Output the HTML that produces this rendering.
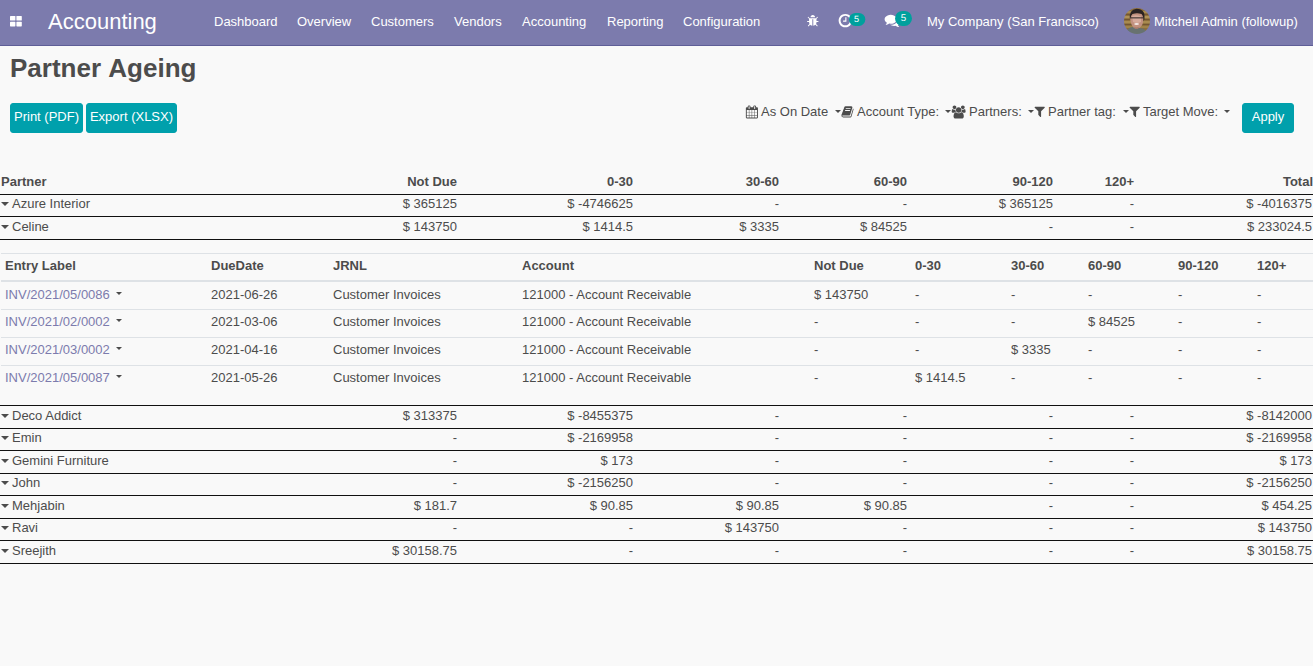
<!DOCTYPE html>
<html><head><meta charset="utf-8"><title>Odoo - Partner Ageing</title>
<style>
*{box-sizing:border-box}
html,body{margin:0;padding:0}
body{width:1313px;height:666px;overflow:hidden;background:#f9f9f9;font-family:"Liberation Sans",Arial,sans-serif;font-size:13px;color:#4c4c4c;line-height:1.5}
.nav{position:absolute;left:0;top:0;width:1313px;height:46px;background:#7c7bad;border-bottom:1px solid #5f5e97;color:#fff}
.nav span,.nav div{position:absolute;white-space:nowrap}
.nav .mi{top:1px;line-height:42px;font-size:13px}
.brand{left:48px;top:1px;line-height:42px;font-size:22px}
h1{position:absolute;left:10px;top:50px;margin:0;font-size:26px;font-weight:bold;line-height:36px;color:#4c4c4c;word-spacing:1px}
.btn{position:absolute;top:103px;height:30px;background:#00a0ac;border:1px solid #00a0ac;border-radius:3px;color:#fff;font-size:13px;line-height:26px;text-align:center;padding:0}
.flt{position:absolute;top:102px;font-size:13px;line-height:20px;white-space:nowrap;color:#4c4c4c}

.r{position:absolute;left:0;width:1313px;height:22px;line-height:22px;font-size:13px;color:#4c4c4c}
.r span{position:absolute;top:0;white-space:nowrap}
.r.h{font-weight:bold}
.ct{position:absolute;left:1px;top:9px;width:0;height:0;border-left:4px solid transparent;border-right:4px solid transparent;border-top:4px solid #4c4c4c}
.ln{position:absolute;left:0;width:1313px;height:1px;background:#111}
.sl{position:absolute;left:1px;width:1312px;height:1px;background:#dee2e6}
.s{position:absolute;left:0;width:1313px;height:26px;line-height:26px;font-size:13px;color:#4c4c4c}
.s.h{font-weight:bold}
.s span{position:absolute;top:0;white-space:nowrap}
.s a{color:#7c7bad}
.ct2{display:inline-block;margin-left:6px;vertical-align:4px;width:0;height:0;border-left:3px solid transparent;border-right:3px solid transparent;border-top:3.5px solid #4c4c4c}

.fc{position:absolute;top:110px;width:0;height:0;border-left:3px solid transparent;border-right:3px solid transparent;border-top:3px solid #4c4c4c}
</style></head><body>
<div class="nav">
 <svg style="position:absolute;left:10px;top:16px" width="12" height="11" viewBox="0 0 12 11"><rect x="0" y="0" width="5.4" height="4.6" rx=".6" fill="#fff"/><rect x="6.4" y="0" width="5.4" height="4.6" rx=".6" fill="#fff"/><rect x="0" y="5.8" width="5.4" height="4.6" rx=".6" fill="#fff"/><rect x="6.4" y="5.8" width="5.4" height="4.6" rx=".6" fill="#fff"/></svg>
 <span class="brand">Accounting</span>
 <span class="mi" style="left:214px">Dashboard</span>
 <span class="mi" style="left:297px">Overview</span>
 <span class="mi" style="left:371px">Customers</span>
 <span class="mi" style="left:454px">Vendors</span>
 <span class="mi" style="left:522px">Accounting</span>
 <span class="mi" style="left:607px">Reporting</span>
 <span class="mi" style="left:683px">Configuration</span>
 <span class="mi" style="left:927px">My Company (San Francisco)</span>
 <span class="mi" style="left:1154px">Mitchell Admin (followup)</span>
<svg style="position:absolute;left:806px;top:14px" width="15" height="15" viewBox="0 0 15 15"><path fill="#fff" transform="translate(0.30 0.50) scale(0.007254)" d="M1696 960q0 26-19 45t-45 19h-224q0 171-67 290l208 209q19 19 19 45t-19 45q-18 19-45 19t-45-19l-198-197q-5 5-15 13t-42 28.500-65 36.500-82 29-97 13v-896h-128v896q-51 0-101.500-13.500t-87-33-66-39-43.500-32.500l-15-14-183 207q-20 21-48 21-24 0-43-16-19-18-20.500-44.500t15.500-46.500l202-227q-58-114-58-274h-224q-26 0-45-19t-19-45 19-45 45-19h224v-294l-173-173q-19-19-19-45t19-45 45-19 45 19l173 173h844l173-173q19-19 45-19t45 19 19 45-19 45l-173 173v294h224q26 0 45 19t19 45zm-480-576h-640q0-133 93.500-226.500t226.500-93.500 226.500 93.500 93.500 226.500z"/></svg>
<svg style="position:absolute;left:837px;top:12px" width="17" height="17" viewBox="0 0 17 17"><path fill="#fff" transform="translate(0.50 0.80) scale(0.008705)" d="M1024 544v448q0 14-9 23t-23 9h-320q-14 0-23-9t-9-23v-64q0-14 9-23t23-9h224v-352q0-14 9-23t23-9h64q14 0 23 9t9 23zm416 352q0-148-73-273t-198-198-273-73-273 73-198 198-73 273 73 273 198 198 273 73 273-73 198-198 73-273zm224 0q0 209-103 385.500t-279.500 279.500-385.500 103-385.500-103-279.500-279.500-103-385.500 103-385.500 279.500-279.500 385.500-103 385.500 103 279.500 279.500 103 385.500z"/></svg>
<svg style="position:absolute;left:848px;top:10px" width="20" height="18" viewBox="848 10 20 18"><rect x="849" y="12.9" width="16.3" height="13" rx="6.5" fill="#00a09d"/><text x="856.6" y="21.8" font-size="9.1" fill="#fff" text-anchor="middle" text-rendering="geometricPrecision" font-family="Liberation Sans, Arial, sans-serif">5</text></svg>
<svg style="position:absolute;left:884px;top:12px" width="17" height="17" viewBox="0 0 17 17"><path fill="#fff" transform="translate(0.60 0.60) scale(0.008705)" d="M1408 768q0 139-94 257t-256.500 186.500-353.500 68.500q-86 0-176-16-124 88-278 128-36 9-86 16h-3q-11 0-20.500-8t-11.500-21q-1-3-1-6.500t.5-6.500 2-6l2.500-5 3.500-5.500 4-5 4.500-5 4-4.500q5-6 23-25t26-29.500 22.500-29 25-38.500 20.500-44q-124-72-195-177t-71-224q0-139 94-257t256.500-186.500 353.500-68.500 353.500 68.500 256.500 186.500 94 257zm384 256q0 120-71 224.500t-195 176.500q10 24 20.500 44t25 38.500 22.500 29 26 29.500 23 25q1 1 4 4.500t4.500 5 4 5 3.500 5.500l2.500 5 2 6 .5 6.500-1 6.500q-3 14-13 22t-22 7q-50-7-86-16-154-40-278-128-90 16-176 16-271 0-472-132 58 4 88 4 161 0 309-45t264-129q125-92 192-212t67-254q0-77-23-152 129 71 204 178t75 230z"/></svg>
<svg style="position:absolute;left:894px;top:9px" width="20" height="19" viewBox="894 9 20 19"><rect x="895" y="10.9" width="17" height="15" rx="7.5" fill="#00a09d"/><text x="903.5" y="21.1" font-size="9.75" fill="#fff" text-anchor="middle" text-rendering="geometricPrecision" font-family="Liberation Sans, Arial, sans-serif">5</text></svg>
<svg style="position:absolute;left:1124px;top:8px" width="26" height="26" viewBox="0 0 26 26"><defs><clipPath id="av"><circle cx="13" cy="13" r="13"/></clipPath><filter id="bl" x="-10%" y="-10%" width="120%" height="120%"><feGaussianBlur stdDeviation="0.55"/></filter></defs><g clip-path="url(#av)"><g filter="url(#bl)"><rect x="-2" y="-2" width="30" height="30" fill="#8d6e3b"/><rect x="-2" y="3" width="30" height="2" fill="#a88a50"/><rect x="-2" y="8" width="30" height="2.2" fill="#ae9158"/><rect x="-2" y="13" width="30" height="2.2" fill="#a88a50"/><rect x="-2" y="18" width="30" height="2" fill="#9f824a"/><rect x="-2" y="6" width="30" height="1" fill="#735730"/><rect x="-2" y="11" width="30" height="1" fill="#735730"/><rect x="-2" y="16" width="30" height="1" fill="#735730"/><path d="M1 27 Q3 19.5 8 19 L15 20 Q20 20 22 23 L23 27 Z" fill="#67726f"/><path d="M6 9 Q5.5 3.5 12 3 Q19.5 3 19.5 10 Q19.5 17 16 19.5 Q13 21.5 10 20 Q6.5 17 6 9 Z" fill="#c2917f"/><path d="M8 8 Q12 6.5 17 8.5 L17 14 Q13 16 9 14 Z" fill="#d6aa9b"/><path d="M5.8 10.5 Q5 2 12.5 0.8 Q20.5 1 20.5 8 Q20.8 11 19.6 13.5 Q19.5 8 17.5 6 Q13 4.5 8.5 6 Q6.5 7.5 6.6 10.5 Z" fill="#2a2321"/><rect x="6.5" y="9.3" width="13" height="1.1" fill="#3d302d"/><ellipse cx="12.6" cy="16" rx="2.4" ry="1.1" fill="#f3e8e4"/><path d="M9.5 18.5 Q12.5 20.5 15.5 18.5 Q14 21 12.5 21 Q11 21 9.5 18.5Z" fill="#a87868"/></g></g></svg>
</div>
<h1>Partner Ageing</h1>
<div class="btn" style="left:10px;width:73px">Print (PDF)</div>
<div class="btn" style="left:86px;width:91px">Export (XLSX)</div>
<div class="flt" style="left:761px">As On Date</div>
<div class="flt" style="left:857px">Account Type:</div>
<div class="flt" style="left:969px">Partners:</div>
<div class="flt" style="left:1048px">Partner tag:</div>
<div class="flt" style="left:1143px">Target Move:</div>
<svg style="position:absolute;left:745px;top:105px" width="15" height="15" viewBox="0 0 15 15"><path fill="#4c4c4c" transform="translate(0.40 0.40) scale(0.007254)" d="M192 1664h288v-288h-288v288zm352 0h320v-288h-320v288zm-352-352h288v-320h-288v320zm352 0h320v-320h-320v320zm-352-384h288v-288h-288v288zm736 736h320v-288h-320v288zm-384-736h320v-288h-320v288zm768 736h288v-288h-288v288zm-384-352h320v-320h-320v320zm-352-864v-288q0-13-9.500-22.500t-22.500-9.500h-64q-13 0-22.500 9.500t-9.500 22.500v288q0 13 9.500 22.500t22.500 9.500h64q13 0 22.500-9.500t9.500-22.500zm736 864h288v-320h-288v320zm-384-384h320v-288h-320v288zm384 0h288v-288h-288v288zm32-480v-288q0-13-9.500-22.500t-22.500-9.500h-64q-13 0-22.500 9.500t-9.500 22.500v288q0 13 9.500 22.500t22.500 9.500h64q13 0 22.500-9.500t9.500-22.500zm384-64v1280q0 52-38 90t-90 38h-1408q-52 0-90-38t-38-90v-1280q0-52 38-90t90-38h128v-96q0-66 47-113t113-47h64q66 0 113 47t47 113v96h384v-96q0-66 47-113t113-47h64q66 0 113 47t47 113v96h128q52 0 90 38t38 90z"/></svg>
<i class="fc" style="left:835px"></i>
<svg style="position:absolute;left:841px;top:105px" width="14" height="15" viewBox="0 0 14 15"><path fill="#4c4c4c" transform="translate(0.00 0.40) scale(0.007254)" d="M1703 478q40 57 18 129l-275 906q-19 64-76.500 107.500t-122.500 43.500h-923q-77 0-148.500-53.500t-99.500-131.500q-24-67-2-127 0-4 3-27t4-37q1-8-3-21.500t-3-19.500q2-11 8-21t16.500-23.500 16.500-23.500q23-38 45-91.500t30-91.500q3-10 .5-30t-.5-28q3-11 17-28t17-23q21-36 42-92t25-90q1-9-2.500-32t.5-28q4-13 22-30.500t22-22.500q19-26 42.500-84.500t27.500-96.500q1-8-3-25.500t-2-26.500q2-8 9-18t18-23 17-21q8-12 16.500-30.500t15-35 16-36 19.500-32 26.500-23.500 36-11.500 47.500 5.500l-1 3q38-9 51-9h761q74 0 114 56t18 130l-274 906q-36 119-71.500 153.500t-128.500 34.500h-869q-27 0-38 15-11 16-1 43 24 70 144 70h923q29 0 56-15.500t35-41.500l300-987q7-22 5-57 38 15 59 43zm-1064 2q-4 13 2 22.500t20 9.500h608q13 0 25.500-9.500t16.500-22.500l21-64q4-13-2-22.500t-20-9.500h-608q-13 0-25.500 9.500t-16.500 22.500zm-83 256q-4 13 2 22.500t20 9.500h608q13 0 25.500-9.500t16.500-22.500l21-64q4-13-2-22.500t-20-9.500h-608q-13 0-25.500 9.500t-16.500 22.500z"/></svg>
<i class="fc" style="left:945px"></i>
<svg style="position:absolute;left:951px;top:105px" width="16" height="15" viewBox="0 0 16 15"><path fill="#4c4c4c" transform="translate(0.70 0.40) scale(0.007254)" d="M593 896q-162 5-265 128h-134q-82 0-138-40.500t-56-118.500q0-353 124-353 6 0 43.500 21t97.500 42.500 119 21.500q67 0 133-23-5 37-5 66 0 139 81 256zm1071 637q0 120-73 189.500t-194 69.500h-874q-121 0-194-69.500t-73-189.500q0-53 3.500-103.500t14-109 26.500-108.500 43-97.500 62-81 85.500-53.500 111.500-20q10 0 43 21.500t73 48 107 48 135 21.500 135-21.500 107-48 73-48 43-21.500q61 0 111.500 20t85.500 53.500 62 81 43 97.500 26.500 108.500 14 109 3.500 103.500zm-1024-1277q0 106-75 181t-181 75-181-75-75-181 75-181 181-75 181 75 75 181zm704 384q0 159-112.500 271.500t-271.500 112.500-271.500-112.500-112.500-271.500 112.500-271.500 271.500-112.500 271.500 112.500 112.500 271.500zm576 225q0 78-56 118.500t-138 40.500h-134q-103-123-265-128 81-117 81-256 0-29-5-66 66 23 133 23 59 0 119-21.500t97.500-42.500 43.500-21q124 0 124 353zm-128-609q0 106-75 181t-181 75-181-75-75-181 75-181 181-75 181 75 75 181z"/></svg>
<i class="fc" style="left:1028.4px"></i>
<svg style="position:absolute;left:1033px;top:105px" width="15" height="15" viewBox="0 0 15 15"><path fill="#4c4c4c" transform="translate(0.20 0.00) scale(0.007254)" d="M1595 295q17 41-14 70l-493 493v742q0 42-39 59-13 5-25 5-27 0-45-19l-256-256q-19-19-19-45v-486l-493-493q-31-29-14-70 17-39 59-39h1280q42 0 59 39z"/></svg>
<i class="fc" style="left:1123px"></i>
<svg style="position:absolute;left:1128px;top:105px" width="15" height="15" viewBox="0 0 15 15"><path fill="#4c4c4c" transform="translate(0.20 0.00) scale(0.007254)" d="M1595 295q17 41-14 70l-493 493v742q0 42-39 59-13 5-25 5-27 0-45-19l-256-256q-19-19-19-45v-486l-493-493q-31-29-14-70 17-39 59-39h1280q42 0 59 39z"/></svg>
<i class="fc" style="left:1224px"></i>
<div class="btn" style="left:1242px;width:52px;top:103px;height:30px;line-height:26px">Apply</div>
<!--TABLES-->
<div class="r h" style="top:171px"><span class="c0" style="left:1px">Partner</span><span class="cr" style="right:856px">Not Due</span><span class="cr" style="right:680px">0-30</span><span class="cr" style="right:534px">30-60</span><span class="cr" style="right:406px">60-90</span><span class="cr" style="right:260px">90-120</span><span class="cr" style="right:179px">120+</span><span class="cr" style="right:0px">Total</span></div>
<div class="r" style="top:193px"><i class="ct"></i><span class="c0" style="left:12px">Azure Interior</span><span class="cr" style="right:856px">$ 365125</span><span class="cr" style="right:680px">$ -4746625</span><span class="cr" style="right:534px">-</span><span class="cr" style="right:406px">-</span><span class="cr" style="right:260px">$ 365125</span><span class="cr" style="right:179px">-</span><span class="cr" style="right:1px">$ -4016375</span></div>
<div class="r" style="top:216px"><i class="ct"></i><span class="c0" style="left:12px">Celine</span><span class="cr" style="right:856px">$ 143750</span><span class="cr" style="right:680px">$ 1414.5</span><span class="cr" style="right:534px">$ 3335</span><span class="cr" style="right:406px">$ 84525</span><span class="cr" style="right:260px">-</span><span class="cr" style="right:179px">-</span><span class="cr" style="right:1px">$ 233024.5</span></div>
<div class="ln" style="top:194px"></div>
<div class="ln" style="top:216px"></div>
<div class="ln" style="top:239px"></div>
<div class="r" style="top:405px"><i class="ct"></i><span class="c0" style="left:12px">Deco Addict</span><span class="cr" style="right:856px">$ 313375</span><span class="cr" style="right:680px">$ -8455375</span><span class="cr" style="right:534px">-</span><span class="cr" style="right:406px">-</span><span class="cr" style="right:260px">-</span><span class="cr" style="right:179px">-</span><span class="cr" style="right:1px">$ -8142000</span></div>
<div class="r" style="top:427px"><i class="ct"></i><span class="c0" style="left:12px">Emin</span><span class="cr" style="right:856px">-</span><span class="cr" style="right:680px">$ -2169958</span><span class="cr" style="right:534px">-</span><span class="cr" style="right:406px">-</span><span class="cr" style="right:260px">-</span><span class="cr" style="right:179px">-</span><span class="cr" style="right:1px">$ -2169958</span></div>
<div class="r" style="top:450px"><i class="ct"></i><span class="c0" style="left:12px">Gemini Furniture</span><span class="cr" style="right:856px">-</span><span class="cr" style="right:680px">$ 173</span><span class="cr" style="right:534px">-</span><span class="cr" style="right:406px">-</span><span class="cr" style="right:260px">-</span><span class="cr" style="right:179px">-</span><span class="cr" style="right:1px">$ 173</span></div>
<div class="r" style="top:472px"><i class="ct"></i><span class="c0" style="left:12px">John</span><span class="cr" style="right:856px">-</span><span class="cr" style="right:680px">$ -2156250</span><span class="cr" style="right:534px">-</span><span class="cr" style="right:406px">-</span><span class="cr" style="right:260px">-</span><span class="cr" style="right:179px">-</span><span class="cr" style="right:1px">$ -2156250</span></div>
<div class="r" style="top:495px"><i class="ct"></i><span class="c0" style="left:12px">Mehjabin</span><span class="cr" style="right:856px">$ 181.7</span><span class="cr" style="right:680px">$ 90.85</span><span class="cr" style="right:534px">$ 90.85</span><span class="cr" style="right:406px">$ 90.85</span><span class="cr" style="right:260px">-</span><span class="cr" style="right:179px">-</span><span class="cr" style="right:1px">$ 454.25</span></div>
<div class="r" style="top:517px"><i class="ct"></i><span class="c0" style="left:12px">Ravi</span><span class="cr" style="right:856px">-</span><span class="cr" style="right:680px">-</span><span class="cr" style="right:534px">$ 143750</span><span class="cr" style="right:406px">-</span><span class="cr" style="right:260px">-</span><span class="cr" style="right:179px">-</span><span class="cr" style="right:1px">$ 143750</span></div>
<div class="r" style="top:540px"><i class="ct"></i><span class="c0" style="left:12px">Sreejith</span><span class="cr" style="right:856px">$ 30158.75</span><span class="cr" style="right:680px">-</span><span class="cr" style="right:534px">-</span><span class="cr" style="right:406px">-</span><span class="cr" style="right:260px">-</span><span class="cr" style="right:179px">-</span><span class="cr" style="right:1px">$ 30158.75</span></div>
<div class="ln" style="top:405px"></div>
<div class="ln" style="top:428px"></div>
<div class="ln" style="top:450px"></div>
<div class="ln" style="top:473px"></div>
<div class="ln" style="top:495px"></div>
<div class="ln" style="top:518px"></div>
<div class="ln" style="top:540px"></div>
<div class="ln" style="top:563px"></div>
<div class="sl" style="top:253px"></div>
<div class="sl" style="top:280px;height:2px"></div>
<div class="s h" style="top:253px"><span style="left:5px">Entry Label</span><span style="left:211px">DueDate</span><span style="left:333px">JRNL</span><span style="left:522px">Account</span><span style="left:814px">Not Due</span><span style="left:915px">0-30</span><span style="left:1011px">30-60</span><span style="left:1088px">60-90</span><span style="left:1178px">90-120</span><span style="left:1257px">120+</span></div>
<div class="s" style="top:282px"><span style="left:5px"><a>INV/2021/05/0086</a><i class="ct2"></i></span><span style="left:211px">2021-06-26</span><span style="left:333px">Customer Invoices</span><span style="left:522px">121000 - Account Receivable</span><span style="left:814px">$ 143750</span><span style="left:915px">-</span><span style="left:1011px">-</span><span style="left:1088px">-</span><span style="left:1178px">-</span><span style="left:1257px">-</span></div>
<div class="sl" style="top:309px"></div>
<div class="s" style="top:309px"><span style="left:5px"><a>INV/2021/02/0002</a><i class="ct2"></i></span><span style="left:211px">2021-03-06</span><span style="left:333px">Customer Invoices</span><span style="left:522px">121000 - Account Receivable</span><span style="left:814px">-</span><span style="left:915px">-</span><span style="left:1011px">-</span><span style="left:1088px">$ 84525</span><span style="left:1178px">-</span><span style="left:1257px">-</span></div>
<div class="sl" style="top:337px"></div>
<div class="s" style="top:337px"><span style="left:5px"><a>INV/2021/03/0002</a><i class="ct2"></i></span><span style="left:211px">2021-04-16</span><span style="left:333px">Customer Invoices</span><span style="left:522px">121000 - Account Receivable</span><span style="left:814px">-</span><span style="left:915px">-</span><span style="left:1011px">$ 3335</span><span style="left:1088px">-</span><span style="left:1178px">-</span><span style="left:1257px">-</span></div>
<div class="sl" style="top:365px"></div>
<div class="s" style="top:365px"><span style="left:5px"><a>INV/2021/05/0087</a><i class="ct2"></i></span><span style="left:211px">2021-05-26</span><span style="left:333px">Customer Invoices</span><span style="left:522px">121000 - Account Receivable</span><span style="left:814px">-</span><span style="left:915px">$ 1414.5</span><span style="left:1011px">-</span><span style="left:1088px">-</span><span style="left:1178px">-</span><span style="left:1257px">-</span></div>
<!--/TABLES-->
</body></html>
